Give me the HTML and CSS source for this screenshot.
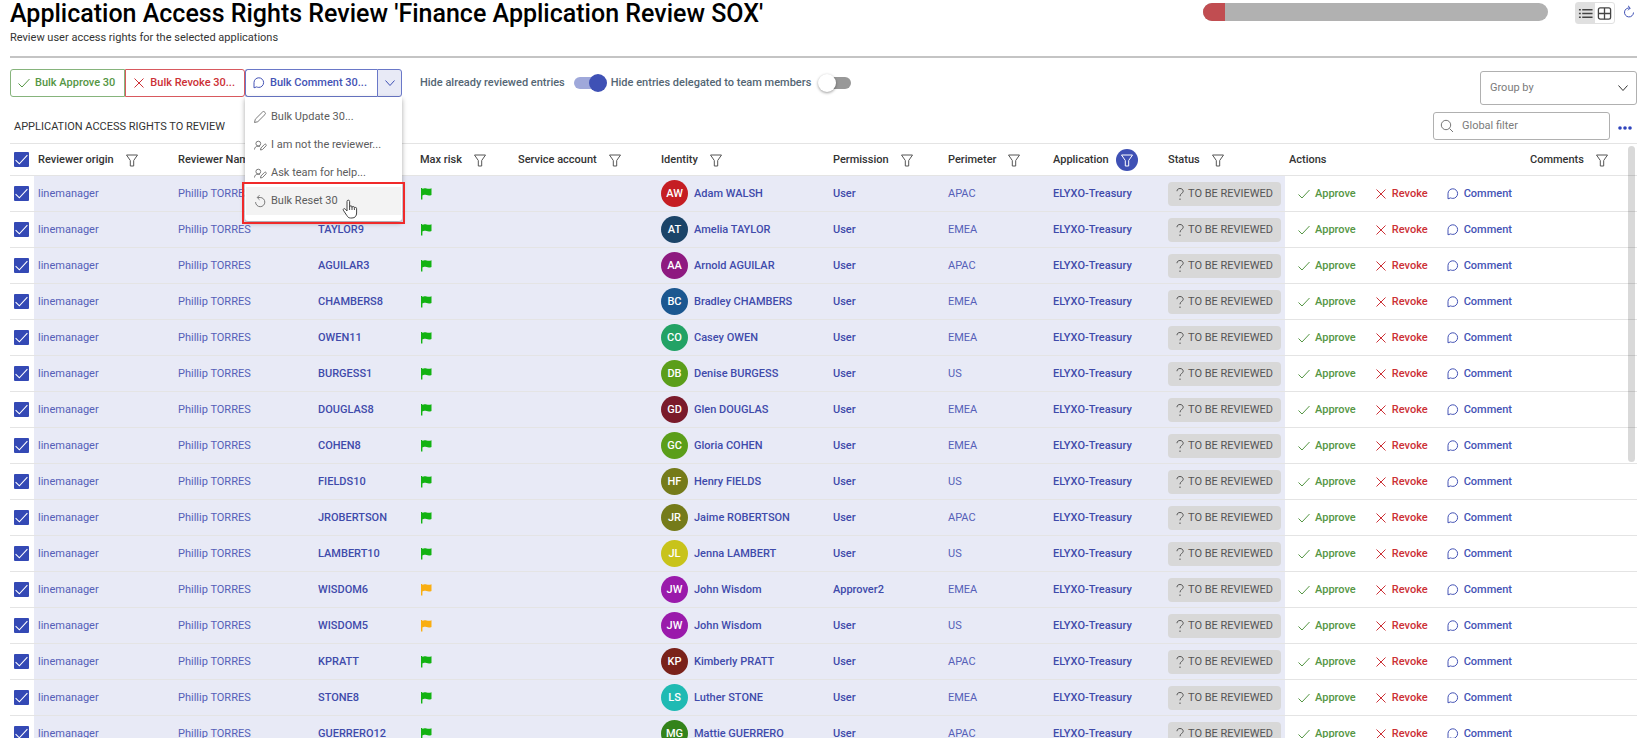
FILE: index.html
```html
<!DOCTYPE html>
<html lang="en">
<head>
<meta charset="utf-8">
<title>Application Access Rights Review</title>
<link rel="stylesheet" href="styles.css">
</head>
<body>
<svg class="sprite" aria-hidden="true">
  <symbol id="i-check" viewBox="0 0 14 14"><path d="M1.500 7.500 5 11 12.500 3"/></symbol>
  <symbol id="i-x" viewBox="0 0 14 14"><path d="M2.500 2.500l9 9M11.500 2.500l-9 9"/></symbol>
  <symbol id="i-comment" viewBox="0 0 14 14"><path d="M2 11.800V6.600a4.800 4.800 0 1 1 4.800 4.800c-.9 0-1.500-.2-2.200-.5z"/></symbol>
  <symbol id="i-chevron" viewBox="0 0 14 14"><path d="M2.500 4.500 7 9.500l4.500-5"/></symbol>
  <symbol id="i-pencil" viewBox="0 0 14 14"><path d="M1.500 12.500l.8-3.300 7.200-7.200a1.500 1.500 0 0 1 2.100 0l.4.4a1.500 1.500 0 0 1 0 2.100l-7.200 7.200z"/></symbol>
  <symbol id="i-user" viewBox="0 0 14 14"><path d="M1.500 11.500c0-2 1.400-3.300 3.500-3.300.8 0 1.400.1 1.900.4M5.300 8a2.400 2.400 0 1 0 0-4.800 2.400 2.400 0 0 0 0 4.800zM7.500 12l.4-2 3.600-3.600a1 1 0 0 1 1.500 1.500L9.500 11.500z"/></symbol>
  <symbol id="i-undo" viewBox="0 0 14 14"><path d="M4.500 3.500H7.200a4.600 4.600 0 1 1-4.600 4.600M6.500 1.200 4.200 3.500l2.300 2.300"/></symbol>
  <symbol id="i-filter" viewBox="0 0 14 14"><path d="M1.500 2h11L8.700 7.500V13H5.300V7.500z"/></symbol>
  <symbol id="i-question" viewBox="0 0 14 14"><path d="M4 4.200C4 2.500 5.200 1.500 7 1.500s3.200 1.100 3.200 2.800C10.200 6.500 7 6.300 7 9.300M7 11.500v1.500"/></symbol>
  <symbol id="i-search" viewBox="0 0 14 14"><circle cx="6" cy="6" r="4.700"/><path d="M9.500 9.500l3.500 3.500"/></symbol>
  <symbol id="i-flag" viewBox="0 0 14 14"><path d="M1 1h1.200l.3.900C5-.2 7.500 3 11.500 1.300V8C7.500 9.700 5 6.500 2.400 8.500V12.500H1z"/></symbol>
</svg>

<header class="page-header">
  <div class="heading">
    <h1>Application Access Rights Review 'Finance Application Review SOX'</h1>
    <p>Review user access rights for the selected applications</p>
  </div>
  <div class="header-tools">
    <div class="progress" role="progressbar" aria-label="Review progress" aria-valuenow="6"><span class="progress-fill"></span></div>
    <div class="view-switch">
      <button class="view-btn active" aria-label="List view"><svg viewBox="0 0 16 16"><path d="M4.500 4h11M4.500 8h11M4.500 12h11"/><path d="M1 4h2M1 8h2M1 12h2"/></svg></button>
      <button class="view-btn" aria-label="Grid view"><svg viewBox="0 0 16 16"><rect x="1.500" y="2" width="13" height="12" rx="2"/><path d="M8 2v12M1.500 8h13"/></svg></button>
    </div>
    <button class="refresh" aria-label="Refresh"><svg viewBox="0 0 14 14"><path d="M7.800 3A4.500 4.500 0 1 0 11.500 7.500M6 .8 8.300 3 6 5.300"/></svg></button>
  </div>
</header>

<section class="toolbar">
  <div class="bulk">
    <button class="bulk-btn approve"><svg class="icon"><use href="#i-check"/></svg>Bulk Approve 30</button>
    <button class="bulk-btn revoke"><svg class="icon"><use href="#i-x"/></svg>Bulk Revoke 30...</button>
    <div class="split">
      <button class="bulk-btn comment"><svg class="icon"><use href="#i-comment"/></svg>Bulk Comment 30...</button>
      <button class="bulk-btn more" aria-label="More bulk actions" aria-expanded="true"><svg class="icon"><use href="#i-chevron"/></svg></button>
      <div class="menu">
        <button class="menu-item"><svg class="icon"><use href="#i-pencil"/></svg>Bulk Update 30...</button>
        <button class="menu-item"><svg class="icon"><use href="#i-user"/></svg>I am not the reviewer...</button>
        <button class="menu-item"><svg class="icon"><use href="#i-user"/></svg>Ask team for help...</button>
        <button class="menu-item hovered"><svg class="icon"><use href="#i-undo"/></svg>Bulk Reset 30</button>
        <span class="highlight"></span>
        <svg class="cursor" viewBox="0 0 16 20"><path d="M5 12V2.500a1.300 1.300 0 0 1 2.600 0V8a1.200 1.200 0 0 1 2.400 0v.6a1.200 1.200 0 0 1 2.400.2v.6a1.100 1.100 0 0 1 2.200.3V14c0 3-1.600 5-4.600 5H8.500C6.500 19 5.500 17.800 4.700 16.300L1.300 11.200c-.6-1.200 1-2.200 2-1.100z"/><path d="M7.600 8v3M10 8.600V11M12.400 9.400V11"/></svg>
      </div>
    </div>
  </div>
  <div class="switches">
    <label>Hide already reviewed entries <input type="checkbox" class="switch" checked></label>
    <label>Hide entries delegated to team members <input type="checkbox" class="switch"></label>
  </div>
  <div class="group-by">
    <select aria-label="Group by"><option>Group by</option></select>
    <svg class="icon"><use href="#i-chevron"/></svg>
  </div>
</section>

<section class="table-bar">
  <h2>APPLICATION ACCESS RIGHTS TO REVIEW</h2>
  <div class="search"><svg class="icon"><use href="#i-search"/></svg><input type="text" placeholder="Global filter" aria-label="Global filter"></div>
  <button class="overflow" aria-label="More options"><svg viewBox="0 0 14 4"><circle cx="2" cy="2" r="1.800"/><circle cx="7" cy="2" r="1.800"/><circle cx="12" cy="2" r="1.800"/></svg></button>
</section>

<main class="table-area">
  <table>
    <colgroup><col class="c-check"><col class="c-origin"><col class="c-name"><col class="c-login"><col class="c-risk"><col class="c-service"><col class="c-identity"><col class="c-permission"><col class="c-perimeter"><col class="c-application"><col class="c-status"><col class="c-actions"><col></colgroup>
    <thead><tr id="head"></tr></thead>
    <tbody id="rows"></tbody>
  </table>
  <span class="scroll-thumb"></span>
</main>
<script src="table.js"></script>
</body>
</html>
```
FILE: table.js
```js
const icon = (name) => `<svg class="icon"><use href="#i-${name}"/></svg>`;

const columns = ['Reviewer origin', 'Reviewer Name', '', 'Max risk', 'Service account', 'Identity',
  'Permission', 'Perimeter', 'Application', 'Status', 'Actions', 'Comments'];

const entries = [
  ['', 'low', 'AW', '#c51d23', 'Adam WALSH', 'User', 'APAC'],
  ['TAYLOR9', 'low', 'AT', '#1b4468', 'Amelia TAYLOR', 'User', 'EMEA'],
  ['AGUILAR3', 'low', 'AA', '#8e1a80', 'Arnold AGUILAR', 'User', 'APAC'],
  ['CHAMBERS8', 'low', 'BC', '#1b5790', 'Bradley CHAMBERS', 'User', 'EMEA'],
  ['OWEN11', 'low', 'CO', '#22a265', 'Casey OWEN', 'User', 'EMEA'],
  ['BURGESS1', 'low', 'DB', '#5b9e1a', 'Denise BURGESS', 'User', 'US'],
  ['DOUGLAS8', 'low', 'GD', '#7a1a2a', 'Glen DOUGLAS', 'User', 'EMEA'],
  ['COHEN8', 'low', 'GC', '#5b9e1a', 'Gloria COHEN', 'User', 'EMEA'],
  ['FIELDS10', 'low', 'HF', '#757b1a', 'Henry FIELDS', 'User', 'US'],
  ['JROBERTSON', 'low', 'JR', '#757b1a', 'Jaime ROBERTSON', 'User', 'APAC'],
  ['LAMBERT10', 'low', 'JL', '#c8c31b', 'Jenna LAMBERT', 'User', 'US'],
  ['WISDOM6', 'medium', 'JW', '#9a1aab', 'John Wisdom', 'Approver2', 'EMEA'],
  ['WISDOM5', 'medium', 'JW', '#9a1aab', 'John Wisdom', 'User', 'US'],
  ['KPRATT', 'low', 'KP', '#7a221a', 'Kimberly PRATT', 'User', 'APAC'],
  ['STONE8', 'low', 'LS', '#1fbab3', 'Luther STONE', 'User', 'EMEA'],
  ['GUERRERO12', 'low', 'MG', '#33831a', 'Mattie GUERRERO', 'User', 'APAC'],
];

const headCell = (name) => {
  if (name === '') return '<th></th>';
  if (name === 'Actions') return `<th>${name}</th>`;
  const cls = name === 'Application' ? 'filter-btn applied' : 'filter-btn';
  return `<th><span class="th-in">${name}<button class="${cls}" aria-label="Filter ${name}">${icon('filter')}</button></span></th>`;
};

const row = ([login, risk, initials, color, identity, permission, perimeter]) => `<tr>
  <td class="pick"><label class="tick"><input type="checkbox" checked aria-label="Select ${identity}">${icon('check')}</label></td>
  <td>linemanager</td><td>Phillip TORRES</td><td class="strong">${login}</td>
  <td><span class="flag ${risk}">${icon('flag')}</span></td><td></td>
  <td class="strong"><span class="person"><span class="avatar" style="background:${color}">${initials}</span>${identity}</span></td>
  <td class="strong">${permission}</td><td>${perimeter}</td><td class="strong">ELYXO-Treasury</td>
  <td><span class="chip">${icon('question')}TO BE REVIEWED</span></td>
  <td class="plain"><span class="actions"><button class="act approve">${icon('check')}Approve</button><button class="act revoke">${icon('x')}Revoke</button><button class="act comment">${icon('comment')}Comment</button></span></td>
  <td class="plain"></td></tr>`;

document.getElementById('head').innerHTML =
  `<th class="pick"><label class="tick"><input type="checkbox" checked aria-label="Select all">${icon('check')}</label></th>` +
  columns.map(headCell).join('');
document.getElementById('rows').innerHTML = entries.map(row).join('');
```
FILE: styles.css
```css
* { box-sizing: border-box; }
html, body { height: 100%; }
body {
  margin: 0;
  padding: 0 13px 6px 10px;
  display: flex;
  flex-direction: column;
  overflow: hidden;
  background: #fff;
  color: #333;
  font: 400 11px/18px Roboto, "Liberation Sans", sans-serif;
}
button, input, select { font: inherit; color: inherit; }
button { background: none; border: 0; padding: 0; display: flex; align-items: center; }
h1, h2, p { margin: 0; }
svg { fill: none; stroke: currentColor; stroke-width: 1; display: block; }
.sprite { position: absolute; width: 0; height: 0; }
.icon { width: 14px; height: 14px; flex: none; }

.page-header { display: flex; justify-content: space-between; height: 58px; flex: none; border-bottom: 2px solid #c4c4c4; }
h1 { font-size: 25px; line-height: 28px; font-weight: 500; color: #000; white-space: nowrap; }
.heading p { margin-top: 1px; }
.header-tools { display: flex; align-items: flex-start; padding-top: 2px; }
.progress { width: 345px; height: 18px; margin: 1px 27px 0 0; border-radius: 9px; background: #b1b1b1; overflow: hidden; display: flex; }
.progress-fill { width: 22px; background: #c14d51; }
.view-switch { display: flex; border: 1px solid #e0e0e0; border-radius: 3px; height: 22px; }
.view-btn { width: 19px; justify-content: center; color: #444; }
.view-btn svg { width: 15px; height: 15px; stroke-width: 1.4; }
.view-btn.active { background: #e0e0e0; }
.refresh { margin: 3px 1px 0 7px; color: #3f51b5; }
.refresh svg { width: 14px; height: 14px; }

.toolbar { display: flex; align-items: flex-start; padding-top: 11px; height: 50px; flex: none; }
.bulk, .split { display: flex; position: relative; }
.bulk-btn { height: 28px; padding: 0 9px 0 6px; gap: 4px; border: 1px solid currentColor; font-weight: 500; white-space: nowrap; }
.bulk-btn.approve { border-color: #86b47c; border-radius: 3px 0 0 3px; }
.bulk-btn.revoke { border-color: #d8595e; border-radius: 0 3px 3px 0; }
.bulk-btn.comment { padding-right: 10px; border-color: #6a78c8; border-radius: 3px 0 0 3px; border-right: 0; }
.bulk-btn.more { width: 25px; padding: 0 5px; border-color: #6a78c8; background: #e8eaf6; color: #3f51b5; border-radius: 0 3px 3px 0; }
.approve { color: #559644; }
.revoke { color: #cc3036; }
.comment { color: #4453b5; }
.menu {
  position: absolute; z-index: 2; top: 28px; left: 0; right: 0;
  padding: 6px 1px; background: #fff; color: #5c5c5c;
  border-radius: 0 0 3px 3px; box-shadow: 0 2px 5px rgba(0, 0, 0, .35);
}
.menu-item { width: 100%; height: 28px; padding: 0 7px; gap: 4px; white-space: nowrap; }
.menu-item .icon { color: #7a7a7a; }
.menu-item.hovered { background: #f3f3f3; }
.highlight { position: absolute; inset: 85px -3px -3px -3px; border: 2px solid #f02a2a; }
.cursor { position: absolute; width: 16px; height: 20px; left: 97px; top: 102px; fill: #fff; stroke: #444; }

.switches { display: flex; gap: 6px; margin-left: 18px; height: 28px; color: #546674; font-weight: 500; }
.switches label { display: flex; align-items: center; gap: 9px; white-space: nowrap; }
.switch { appearance: none; position: relative; margin: 0; width: 31px; height: 12px; border-radius: 6px; background: #989898; }
.switch::before {
  content: ""; position: absolute; top: -3px; left: -2px; width: 18px; height: 18px;
  border-radius: 50%; background: #fff; box-shadow: 0 1px 3px rgba(0, 0, 0, .4);
}
.switch:checked { background: #9fa8da; }
.switch:checked::before { left: auto; right: -2px; background: #3f51b5; box-shadow: none; }

.group-by { position: relative; margin: 2px 0 0 auto; width: 157px; }
.group-by select { appearance: none; width: 100%; height: 34px; padding: 0 9px; border: 1px solid #b0b0b0; border-radius: 3px; background: #fff; color: #7b7b7b; }
.group-by .icon { position: absolute; right: 7px; top: 10px; stroke: #333; pointer-events: none; }

.table-bar { display: flex; align-items: center; flex: none; height: 35px; }
h2 { font-size: 11px; font-weight: 400; margin: 2px auto 0 4px; }
.search { width: 177px; height: 28px; padding: 0 6px; gap: 8px; display: flex; align-items: center; border: 1px solid #b0b0b0; border-radius: 3px; color: #777; }
.search input { border: 0; outline: 0; padding: 0; width: 100%; background: none; }
.search input::placeholder { color: #7b7b7b; opacity: 1; }
.overflow { margin: 4px 5px 0 8px; }
.overflow svg { width: 14px; height: 4px; fill: #2f44bd; stroke: none; }

.table-area { position: relative; flex: 1; min-height: 0; overflow: hidden; border-top: 1px solid #e4e4e4; }
table { width: 100%; border-collapse: separate; border-spacing: 0; table-layout: fixed; }
.c-check { width: 24px; }
.c-origin, .c-name { width: 140px; }
.c-login { width: 102px; }
.c-risk { width: 98px; }
.c-service { width: 143px; }
.c-identity { width: 172px; }
.c-permission { width: 115px; }
.c-perimeter { width: 105px; }
.c-application { width: 115px; }
.c-status { width: 121px; }
.c-actions { width: 241px; }
th, td { padding: 0 0 0 4px; border-bottom: 1px solid #e4e4e4; text-align: left; white-space: nowrap; }
th { height: 32px; font-weight: 500; color: #333; }
td { height: 36px; background: #e8eaf6; color: #5560b8; }
td.plain, td.pick { background: #fff; }
td.strong { font-weight: 500; color: #3f4bab; }
.th-in { display: flex; align-items: center; gap: 7px; }
.filter-btn { width: 22px; height: 22px; justify-content: center; border-radius: 50%; color: #555; }
.filter-btn.applied { background: #3f51b5; color: #fff; }
.tick { display: flex; position: relative; width: 15px; height: 15px; }
.tick input { appearance: none; margin: 0; width: 15px; height: 15px; background: #3449b5; border-radius: 1px; }
.tick .icon { position: absolute; inset: 0; width: 15px; height: 15px; color: #fff; pointer-events: none; }
.flag.low { color: #12b212; }
.flag.medium { color: #f9ae12; }
.flag .icon { fill: currentColor; stroke: none; }
.person { display: flex; align-items: center; gap: 6px; }
.avatar { width: 27px; height: 27px; border-radius: 50%; display: flex; align-items: center; justify-content: center; color: #fff; }
.chip { display: flex; align-items: center; gap: 1px; width: 113px; height: 24px; padding-left: 5px; border-radius: 4px; background: #d8d8d8; color: #555; }
.actions { display: flex; gap: 18px; padding-left: 8px; }
.act { gap: 4px; font-weight: 500; }
.scroll-thumb { position: absolute; top: 2px; right: 2px; width: 7px; height: 316px; border-radius: 4px; background: rgba(0, 0, 0, .15); }
```
